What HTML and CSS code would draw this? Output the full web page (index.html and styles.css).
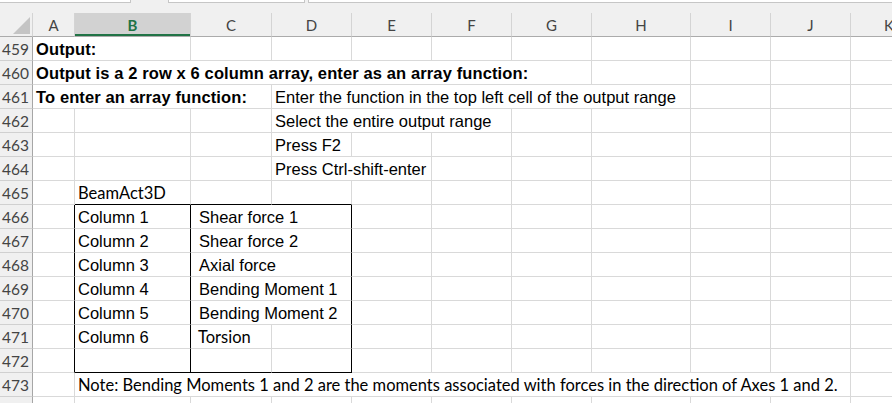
FILE: index.html
```html
<!DOCTYPE html>
<html>
<head>
<meta charset="utf-8">
<link rel="stylesheet" href="styles.css">
</head>
<body>
<div class="topbar">
  <div class="fb fb1"></div>
  <div class="fb fb2"></div>
  <div class="fb fb3"></div>
</div>
<div class="sheet">
  <div class="ch corner"><span class="tri"></span></div>
  <div class="ch">A</div>
  <div class="ch sel">B</div>
  <div class="ch">C</div>
  <div class="ch">D</div>
  <div class="ch">E</div>
  <div class="ch">F</div>
  <div class="ch">G</div>
  <div class="ch">H</div>
  <div class="ch">I</div>
  <div class="ch">J</div>
  <div class="ch last">K</div>

  <div class="rh">459</div>
  <div class="c s2 b">Output:</div>
  <div class="c"></div><div class="c"></div><div class="c"></div><div class="c"></div><div class="c"></div><div class="c"></div><div class="c"></div><div class="c"></div><div class="c"></div>

  <div class="rh">460</div>
  <div class="c s7 b">Output is a 2 row x 6 column array, enter as an array function:</div>
  <div class="c"></div><div class="c"></div><div class="c"></div><div class="c"></div>

  <div class="rh">461</div>
  <div class="c s3 b">To enter an array function:</div>
  <div class="c s5">Enter the function in the top left cell of the output range</div>
  <div class="c"></div><div class="c"></div><div class="c"></div>

  <div class="rh">462</div>
  <div class="c"></div><div class="c"></div><div class="c"></div>
  <div class="c s3">Select the entire output range</div>
  <div class="c"></div><div class="c"></div><div class="c"></div><div class="c"></div><div class="c"></div>

  <div class="rh">463</div>
  <div class="c"></div><div class="c"></div><div class="c"></div>
  <div class="c">Press F2</div>
  <div class="c"></div><div class="c"></div><div class="c"></div><div class="c"></div><div class="c"></div><div class="c"></div><div class="c"></div>

  <div class="rh">464</div>
  <div class="c"></div><div class="c"></div><div class="c"></div>
  <div class="c s2">Press Ctrl-shift-enter</div>
  <div class="c"></div><div class="c"></div><div class="c"></div><div class="c"></div><div class="c"></div><div class="c"></div>

  <div class="rh">465</div>
  <div class="c"></div>
  <div class="c cal kb">BeamAct3D</div>
  <div class="c kb"></div>
  <div class="c kb"></div>
  <div class="c"></div><div class="c"></div><div class="c"></div><div class="c"></div><div class="c"></div><div class="c"></div><div class="c"></div>

  <div class="rh">466</div>
  <div class="c kr"></div>
  <div class="c kr">Column 1</div>
  <div class="c s2 kr in">Shear force 1</div>
  <div class="c"></div><div class="c"></div><div class="c"></div><div class="c"></div><div class="c"></div><div class="c"></div><div class="c"></div>

  <div class="rh">467</div>
  <div class="c kr"></div>
  <div class="c kr">Column 2</div>
  <div class="c s2 kr in">Shear force 2</div>
  <div class="c"></div><div class="c"></div><div class="c"></div><div class="c"></div><div class="c"></div><div class="c"></div><div class="c"></div>

  <div class="rh">468</div>
  <div class="c kr"></div>
  <div class="c kr">Column 3</div>
  <div class="c s2 kr in">Axial force</div>
  <div class="c"></div><div class="c"></div><div class="c"></div><div class="c"></div><div class="c"></div><div class="c"></div><div class="c"></div>

  <div class="rh">469</div>
  <div class="c kr"></div>
  <div class="c kr">Column 4</div>
  <div class="c s2 kr in">Bending Moment 1</div>
  <div class="c"></div><div class="c"></div><div class="c"></div><div class="c"></div><div class="c"></div><div class="c"></div><div class="c"></div>

  <div class="rh">470</div>
  <div class="c kr"></div>
  <div class="c kr">Column 5</div>
  <div class="c s2 kr in">Bending Moment 2</div>
  <div class="c"></div><div class="c"></div><div class="c"></div><div class="c"></div><div class="c"></div><div class="c"></div><div class="c"></div>

  <div class="rh">471</div>
  <div class="c kr"></div>
  <div class="c kr">Column 6</div>
  <div class="c cal in2">Torsion</div>
  <div class="c kr"></div>
  <div class="c"></div><div class="c"></div><div class="c"></div><div class="c"></div><div class="c"></div><div class="c"></div><div class="c"></div>

  <div class="rh">472</div>
  <div class="c kr"></div>
  <div class="c kr kb"></div>
  <div class="c kb"></div>
  <div class="c kr kb"></div>
  <div class="c"></div><div class="c"></div><div class="c"></div><div class="c"></div><div class="c"></div><div class="c"></div><div class="c"></div>

  <div class="rh">473</div>
  <div class="c"></div>
  <div class="c s9 cal">Note: Bending Moments 1 and 2 are the moments associated with forces in the direction of Axes 1 and 2.</div>
  <div class="c"></div>

  <div class="rh"></div>
  <div class="c"></div><div class="c"></div><div class="c"></div><div class="c"></div><div class="c"></div><div class="c"></div><div class="c"></div><div class="c"></div><div class="c"></div><div class="c"></div><div class="c"></div>
</div>
</body>
</html>
```

FILE: styles.css
```css
* { box-sizing: border-box; }
html, body { margin: 0; padding: 0; background: #ffffff; overflow: hidden; }
body { font-family: "Liberation Sans", Arial, sans-serif; width: 892px; }

.topbar {
  display: flex;
  height: 13px;
  background: #f0f0f0;
}
.fb {
  height: 3px;
  background: #ffffff;
  border: 1px solid #c6c6c6;
  border-top: 0;
}
.fb1 { width: 131px; border-left: 0; }
.fb2 { width: 137px; margin-left: 37px; }
.fb3 { flex: 1; margin-left: 3px; border-right: 0; }

.sheet {
  display: grid;
  grid-template-columns: 33px 42px 116px 81px 80px 80px 80px 80px 99px 80px 80px 76px;
  grid-auto-rows: 24px;
  width: 927px;
}

.ch {
  background: #f0f0f0;
  border-right: 1px solid #d4d4d4;
  border-bottom: 1px solid #ababab;
  display: flex;
  align-items: center;
  justify-content: center;
  font-family: Lato, "Noto Sans", sans-serif;
  font-size: 15px;
  color: #444444;
}
.ch.last { border-right: 0; }
.ch.sel {
  background: #d2d2d2;
  color: #217346;
  font-weight: bold;
  box-shadow: inset 0 -2px 0 #217346;
}
.corner {
  justify-content: flex-end;
  align-items: flex-end;
  padding: 0 2px 2px 0;
}
.tri {
  width: 17px;
  height: 17px;
  background: #c4c4c4;
  clip-path: polygon(100% 0, 100% 100%, 0 100%);
}

.rh {
  background: #f0f0f0;
  border-right: 1px solid #a6a6a6;
  border-bottom: 1px solid #d0d0d0;
  display: flex;
  align-items: flex-end;
  justify-content: flex-end;
  padding: 0 3px 2px 0;
  font-family: Lato, "Noto Sans", sans-serif;
  font-size: 15.5px;
  line-height: 18px;
  color: #444444;
}

.c {
  border-right: 1px solid #d9d9d9;
  border-bottom: 1px solid #d9d9d9;
  display: flex;
  align-items: flex-end;
  padding: 0 3px 2px 3px;
  white-space: nowrap;
  font-size: 16.5px;
  line-height: 18px;
  color: #000000;
}
.b { font-weight: bold; letter-spacing: 0.12px; }
.cal {
  font-family: Lato, "Noto Sans", sans-serif;
  font-size: 16.5px;
  padding-bottom: 2px;
}
.in { padding-left: 8px; }
.in2 { padding-left: 7px; }

.s2 { grid-column: span 2; }
.s3 { grid-column: span 3; }
.s5 { grid-column: span 5; }
.s7 { grid-column: span 7; }
.s9 { grid-column: span 9; }

.kr { border-right-color: #000000; }
.kb { border-bottom-color: #000000; }
```
